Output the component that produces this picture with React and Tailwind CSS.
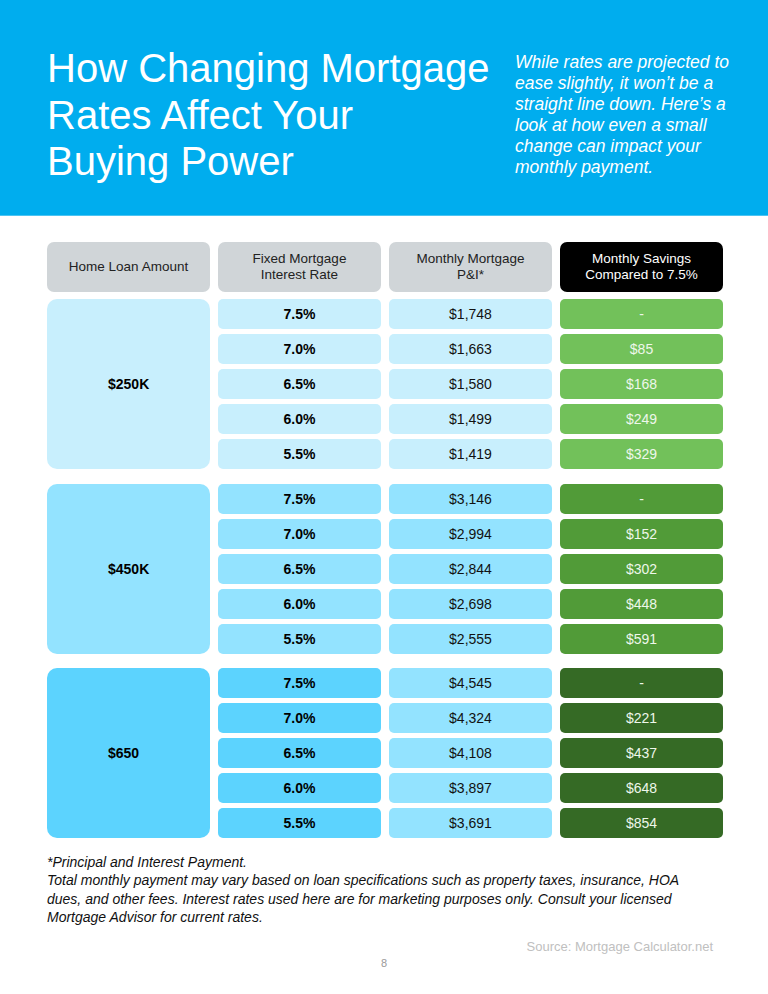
import React from 'react';

const groups = [
  {
    amount: '$250K',
    big: 'bg-[#c8effd]',
    rate: 'bg-[#c8effd]',
    pay: 'bg-[#c8effd]',
    save: 'bg-[#72c15a]',
    rows: [
      ['7.5%', '$1,748', '-'],
      ['7.0%', '$1,663', '$85'],
      ['6.5%', '$1,580', '$168'],
      ['6.0%', '$1,499', '$249'],
      ['5.5%', '$1,419', '$329'],
    ],
  },
  {
    amount: '$450K',
    big: 'bg-[#93e3ff]',
    rate: 'bg-[#93e3ff]',
    pay: 'bg-[#93e3ff]',
    save: 'bg-[#519b38]',
    rows: [
      ['7.5%', '$3,146', '-'],
      ['7.0%', '$2,994', '$152'],
      ['6.5%', '$2,844', '$302'],
      ['6.0%', '$2,698', '$448'],
      ['5.5%', '$2,555', '$591'],
    ],
  },
  {
    amount: '$650',
    big: 'bg-[#5cd3fe]',
    rate: 'bg-[#5cd3fe]',
    pay: 'bg-[#93e3ff]',
    save: 'bg-[#356a25]',
    rows: [
      ['7.5%', '$4,545', '-'],
      ['7.0%', '$4,324', '$221'],
      ['6.5%', '$4,108', '$437'],
      ['6.0%', '$3,897', '$648'],
      ['5.5%', '$3,691', '$854'],
    ],
  },
];

const LoanGroup = ({ group, className }) => (
  <div className={`grid grid-cols-[163px_163px_163px_163px] grid-rows-[30px_30px_30px_30px_30px] gap-x-2 gap-y-[5px] ${className}`}>
    <div className={`row-span-5 rounded-[10px] ${group.big} flex items-center pl-[61px] text-[14px] font-bold text-black`}>
      {group.amount}
    </div>
    {group.rows.map(([rate, pay, save], i) => (
      <React.Fragment key={i}>
        <div className={`col-start-2 rounded-[5px] ${group.rate} flex items-center justify-center text-[14px] font-bold text-black`}>
          {rate}
        </div>
        <div className={`col-start-3 rounded-[5px] ${group.pay} flex items-center justify-center text-[14px] text-[#111]`}>
          {pay}
        </div>
        <div className={`col-start-4 rounded-[5px] ${group.save} flex items-center justify-center text-[14px] text-[#eef7ea]`}>
          {save}
        </div>
      </React.Fragment>
    ))}
  </div>
);

export default function App() {
  return (
    <div className="w-[768px] h-[994px] bg-white overflow-hidden" style={{ fontFamily: '"Liberation Sans", Arial, sans-serif' }}>
      <div className="h-[216px] bg-[#00adee] border-b border-[#4cc4f2] flex pl-[47px] pt-[45px]">
        <h1 className="w-[468px] text-[40px] leading-[46.5px] font-normal text-white whitespace-nowrap">
          How Changing Mortgage<br />Rates Affect Your<br />Buying Power
        </h1>
        <p className="w-[225px] mt-[7px] text-[17.5px] leading-[21px] italic text-white">
          While rates are projected to ease slightly, it won’t be a straight line down. Here’s a look at how even a small change can impact your monthly payment.
        </p>
      </div>

      <div className="px-[47px] mt-[26px]">
        <div className="grid grid-cols-[163px_163px_163px_163px] gap-x-2 h-[50px] text-[13.5px] leading-[16.5px] text-center">
          <div className="rounded-[7px] bg-[#d0d5d8] text-[#222] flex items-center justify-center">Home Loan Amount</div>
          <div className="rounded-[7px] bg-[#d0d5d8] text-[#222] flex items-center justify-center">Fixed Mortgage<br />Interest Rate</div>
          <div className="rounded-[7px] bg-[#d0d5d8] text-[#222] flex items-center justify-center">Monthly Mortgage<br />P&amp;I*</div>
          <div className="rounded-[7px] bg-black text-white flex items-center justify-center">Monthly Savings<br />Compared to 7.5%</div>
        </div>

        <LoanGroup group={groups[0]} className="mt-[7px]" />
        <LoanGroup group={groups[1]} className="mt-[15px]" />
        <LoanGroup group={groups[2]} className="mt-[14px]" />

        <div className="mt-[15px] text-[14px] leading-[18.3px] italic text-[#111] whitespace-nowrap">
          *Principal and Interest Payment.<br />
          Total monthly payment may vary based on loan specifications such as property taxes, insurance, HOA<br />
          dues, and other fees. Interest rates used here are for marketing purposes only. Consult your licensed<br />
          Mortgage Advisor for current rates.
        </div>
      </div>

      <div className="mt-[13px] pr-[55px] text-right text-[13px] leading-[16px] text-[#c0c0c0]">
        Source: Mortgage Calculator.net
      </div>
      <div className="mt-[1px] text-center text-[11px] leading-[14px] text-[#9a9a9a]">8</div>
    </div>
  );
}
